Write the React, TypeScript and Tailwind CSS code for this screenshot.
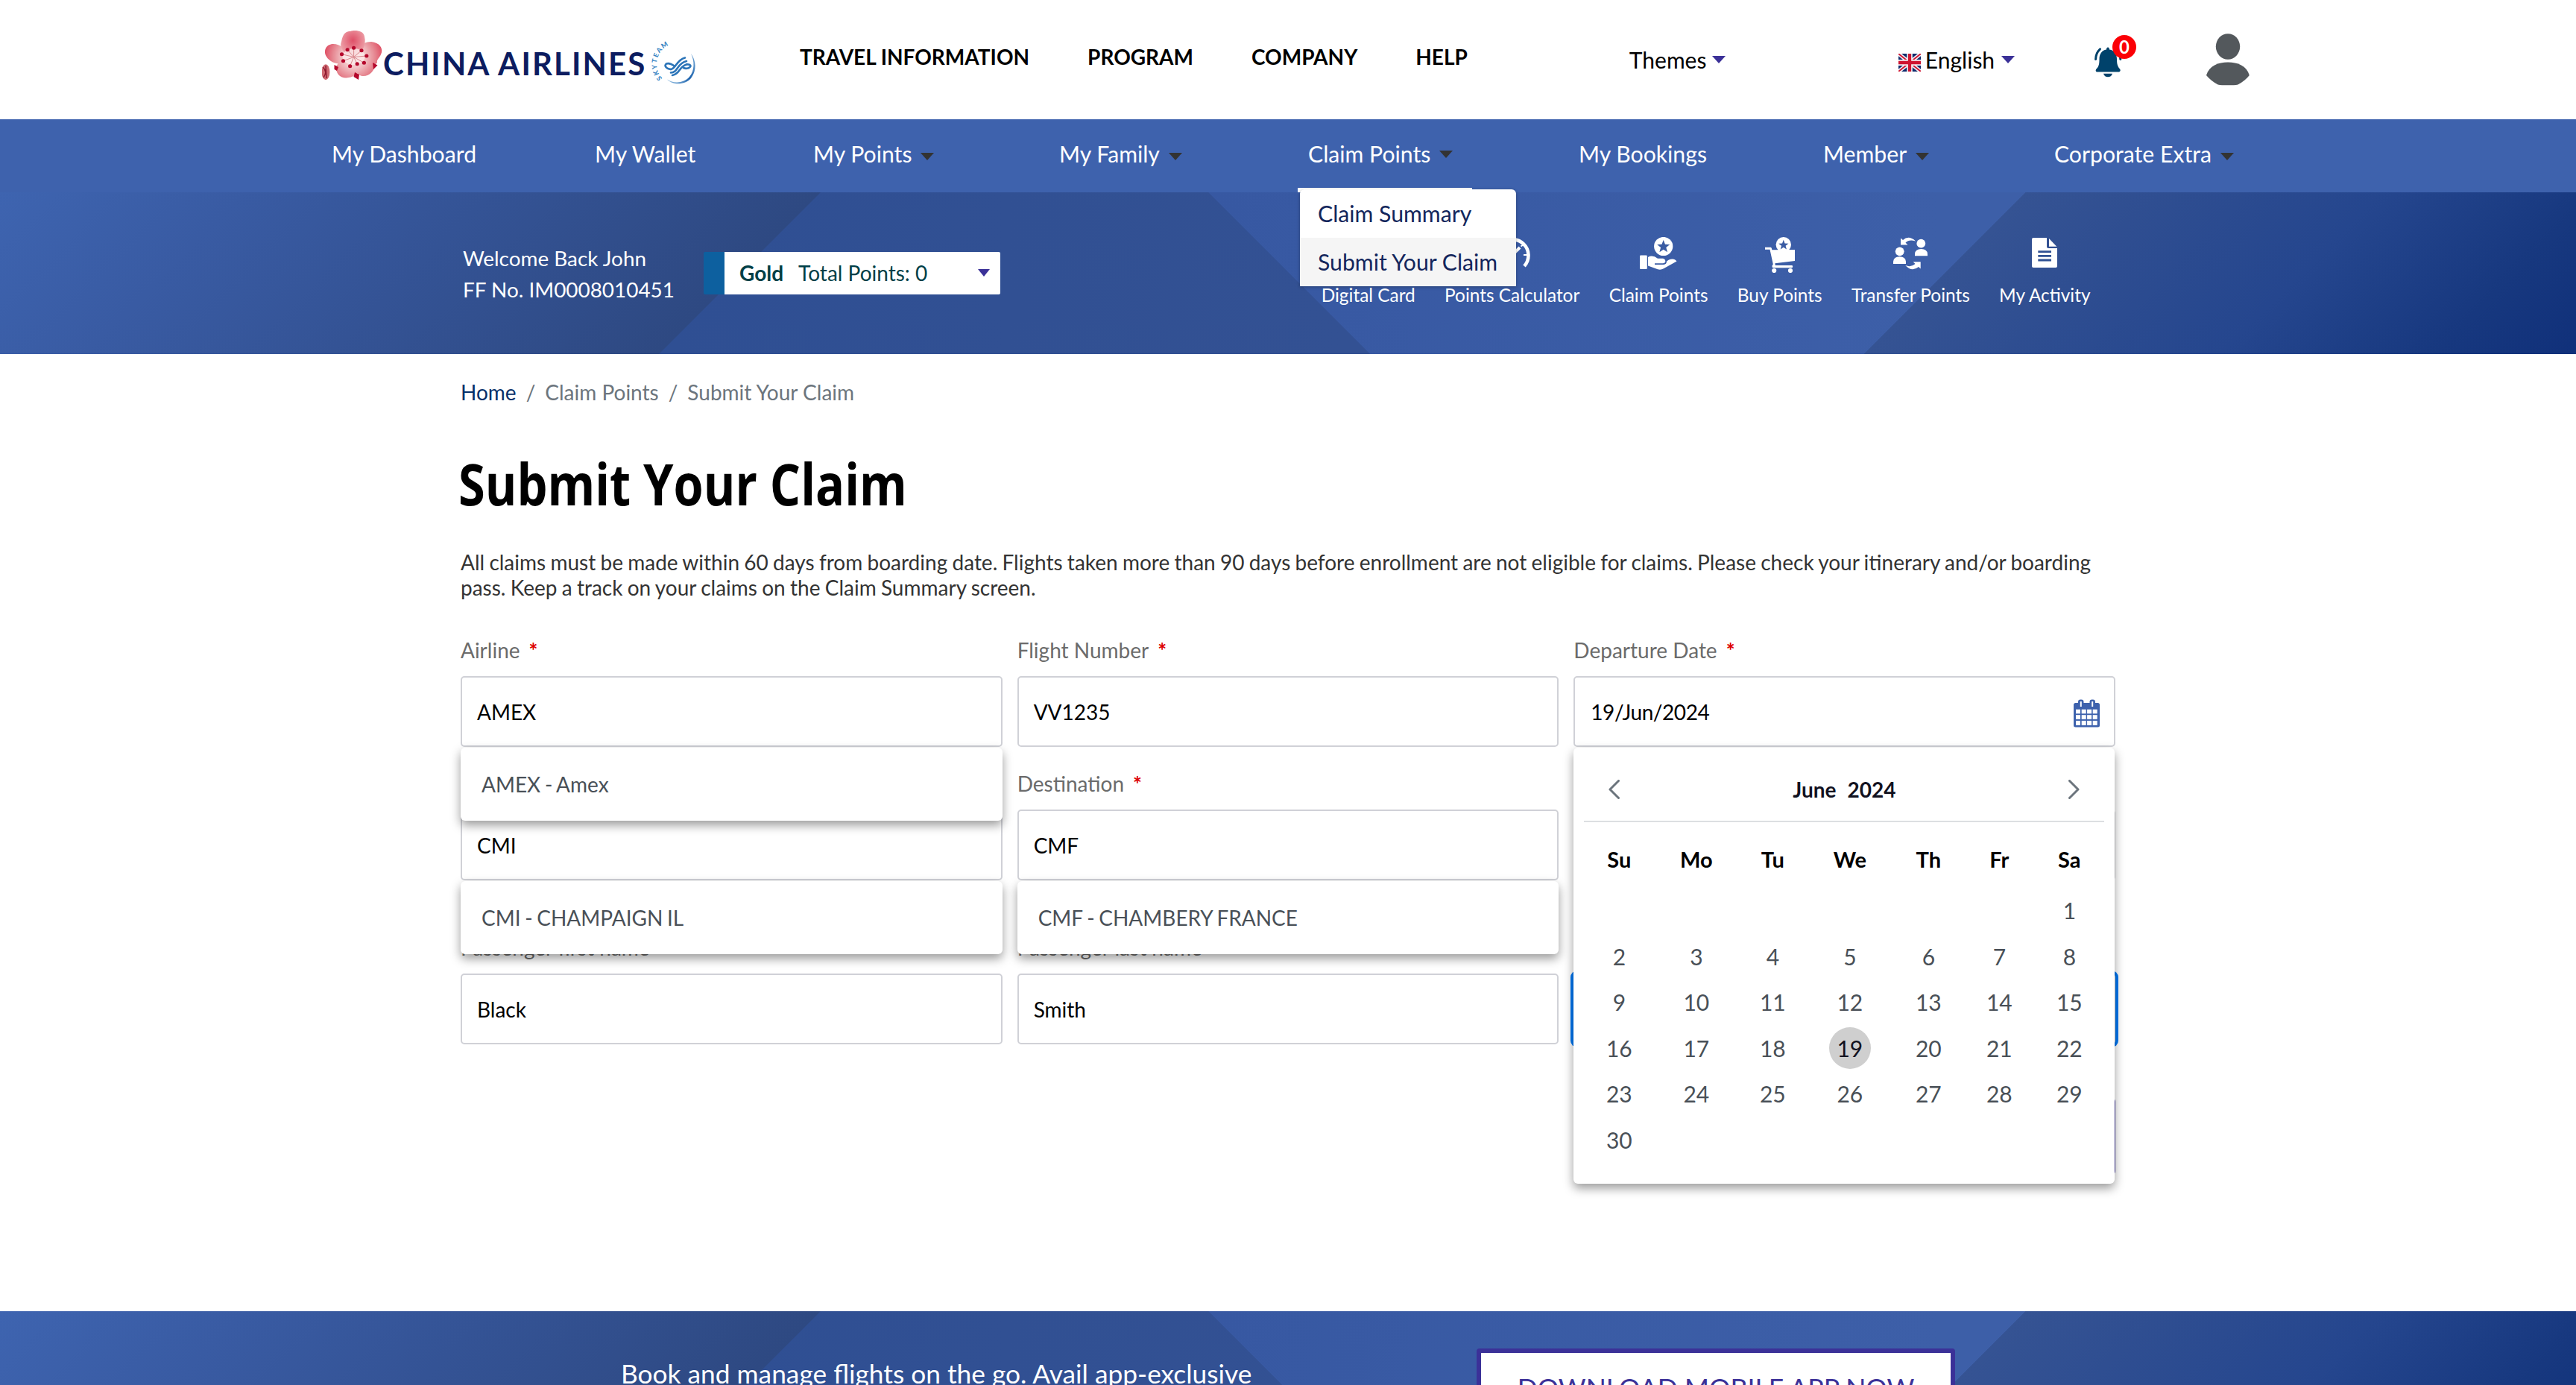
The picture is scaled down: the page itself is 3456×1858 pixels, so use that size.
import type { ReactNode } from "react";

/* ---------- artwork ---------- */

function Flower() {
  const dots = [
    [26.5, 34.7], [34.2, 28.7], [42.6, 26.3], [53, 29.7], [59.8, 37],
    [56.4, 46.3], [47.2, 47.7], [37.6, 50.7], [28.5, 43.7],
  ];
  return (
    <svg width="84" height="72" viewBox="0 0 84 72" className="shrink-0">
      <defs>
        <radialGradient id="petal" gradientUnits="userSpaceOnUse" cx="42.6" cy="38" r="38">
          <stop offset="0" stopColor="#fbeaea" />
          <stop offset="0.4" stopColor="#f2c3c6" />
          <stop offset="0.75" stopColor="#e68791" />
          <stop offset="1" stopColor="#e0566a" />
        </radialGradient>
        <radialGradient id="topPetal" cx="0.5" cy="0.35" r="0.65">
          <stop offset="0" stopColor="#df5068" />
          <stop offset="1" stopColor="#f0b0b4" />
        </radialGradient>
      </defs>
      <ellipse cx="5" cy="58.7" rx="5.4" ry="10.5" fill="#cf6a72" />
      <path d="M1 52 Q8 58 2 66 M5 50 L6 67" stroke="#8f1b30" strokeWidth="1.5" fill="none" />
      <g fill="url(#petal)">
        <path d="M42 42 C30 52 12 48 6 38 C1 30 6 21 15 21 C20 21 24 23 27 25 C34 26 42 32 42 42Z" />
        <path d="M42 42 C42 30 52 18 66 18 C77 19 83 27 79 35 C77 40 73 42 74 46 C70 52 52 54 42 42Z" />
        <path d="M44 36 C36 38 20 44 19 53 C19 62 26 68 36 66 C44 65 48 60 50 54Z" />
        <path d="M40 38 C38 50 46 63 54 64 C63 65 71 57 71 48 C68 38 54 34 40 38Z" />
      </g>
      <path d="M42 40 C33 36 22 27 26 18 C28 6 33 4 38 4 C44 2 56 3 57 11 C60 22 54 34 42 40Z" fill="url(#topPetal)" />
      <ellipse cx="42.6" cy="38" rx="15" ry="11" fill="#fbe9e9" opacity="0.85" />
      <g stroke="#d98a8f" strokeWidth="1">
        {dots.map(([x, y]) => (
          <line key={`${x}l`} x1="42.6" y1="38.5" x2={x} y2={y} />
        ))}
      </g>
      {dots.map(([x, y]) => (
        <ellipse key={x} cx={x} cy={y} rx="2.6" ry="2.5" fill="#b5082c" />
      ))}
      <path d="M44 59 L50 62 L49 69 L42.500 65Z M16.5 49 L22 52 L20 57 L16.5 55Z M68 46 L74.5 49.5 L69 55Z" fill="#b5082c" />
    </svg>
  );
}

function SkyTeam() {
  return (
    <svg width="54" height="54" viewBox="0 0 54 54" className="shrink-0 overflow-visible">
      <defs>
        <path id="skyArc" d="M7.500 45 A23 23 0 0 1 48 7" />
        <linearGradient id="skyRing" x1="0" y1="1" x2="1" y2="0">
          <stop offset="0" stopColor="#9cc6e6" />
          <stop offset="0.5" stopColor="#1c62ad" />
          <stop offset="1" stopColor="#7fb0da" />
        </linearGradient>
      </defs>
      <text className="font-['Lato'] text-[9px] font-black" fill="#3a86c4" letterSpacing="1.6">
        <textPath href="#skyArc">SKYTEAM</textPath>
      </text>
      <path d="M14 46.5 C22 55 38 54 46 45 C54 35 53 21 46 12 C51 22 51 35 44 43 C37 51 24 53 14 46.5Z" fill="url(#skyRing)" />
      <g fill="none" stroke="#2b74b8" strokeWidth="2.6" strokeLinecap="round">
        <path d="M19 33 C25 33 27 20 38 17.5" />
        <path d="M19 37.5 C29 37 27 25 40 22" />
        <path d="M21 41 C32 39 29 30 40 26.5" />
        <path d="M19 33 C12 32 10 28 13 25.5 C17 24 22 27 24 29" />
        <path d="M36 31 C40 33 45 31 45.500 28.500 C45.500 27 43 26 40 26.5" />
      </g>
    </svg>
  );
}

function Flag() {
  return (
    <svg width="30" height="24" viewBox="0 0 60 46" preserveAspectRatio="none" className="shrink-0">
      <rect width="60" height="46" fill="#0f2a6b" />
      <path d="M0 0 L60 46 M60 0 L0 46" stroke="#f3f0f4" strokeWidth="10" />
      <path d="M0 0 L60 46 M60 0 L0 46" stroke="#cf1430" strokeWidth="3.5" />
      <path d="M30 0 V46 M0 23 H60" stroke="#f3f0f4" strokeWidth="15" />
      <path d="M30 0 V46 M0 23 H60" stroke="#cf1430" strokeWidth="8.500" />
    </svg>
  );
}

function Bell() {
  return (
    <svg width="37" height="41" viewBox="0 0 37 41">
      <path d="M18 0.500 C19.500 0.500 20 2 20 3.500 C27 4.500 30 10 30 16 C30 23 31 26 34 29.500 C35.500 31.500 34.500 33.500 32 33.500 H4 C1.500 33.500 1 31.500 2.500 29.500 C6 26 6.500 23 6.500 16 C6.500 10 9.500 4.500 16 3.500 C16 2 16.500 0.500 18 0.500Z" fill="#00426b" />
      <path d="M12 35.800 H24 C23 39 21 40.300 18 40.300 C15 40.300 13 39 12 35.800Z" fill="#00426b" />
      <path d="M7.500 2.800 C3.500 6.500 1.700 11 1.600 16.500 M28.700 2.800 C32.700 6.500 34.700 11 34.800 16.500" stroke="#00426b" strokeWidth="3" strokeLinecap="round" fill="none" />
    </svg>
  );
}

function Avatar() {
  return (
    <svg width="60" height="70" viewBox="0 0 60 70" fill="#53585c">
      <ellipse cx="30" cy="17.500" rx="16.200" ry="17.200" />
      <path d="M1 56 C5 43 17 38.500 30 38.500 C43 38.500 55 43 58.800 56 C55 61 50 65 43.500 68.500 Q41 69.300 38 69.300 H22 Q19 69.300 16.500 68.500 C10 65 5 61 1 56Z" />
    </svg>
  );
}

const STAR = "0,-1 0.25,-0.34 0.95,-0.31 0.4,0.13 0.59,0.81 0,0.42 -0.59,0.81 -0.4,0.13 -0.95,-0.31 -0.25,-0.34";

function CardIcon() {
  return (
    <svg width="48" height="44" viewBox="0 0 48 44" fill="#fff">
      <rect x="2" y="6" width="44" height="32" rx="4" />
    </svg>
  );
}
function GaugeIcon() {
  return (
    <svg width="48" height="44" viewBox="0 0 48 44" fill="none" stroke="#fff">
      <path d="M8 39 A21.500 21.500 0 1 1 40 39" strokeWidth="4.600" />
      <path d="M24 24 L34 14" strokeWidth="4" />
      <path d="M35.500 12.500 L39 10 M39 24 H44 M24 4 V9 M4 24 H9" strokeWidth="2" />
      <circle cx="24" cy="25" r="4" fill="#fff" />
    </svg>
  );
}
function ClaimIcon() {
  return (
    <svg width="50" height="44" viewBox="0 0 50 44" fill="#fff">
      <circle cx="31.700" cy="12.500" r="12.600" />
      <polygon points={STAR} transform="translate(31.7 12.9) scale(9)" fill="#3a5ba3" />
      <rect x="0" y="24.500" width="9.800" height="18.500" rx="1.200" />
      <path d="M11 27 Q17 23.500 24 28.700 H31 Q34.500 29.500 34.300 33 Q33.500 35.300 31 35.300 H20 V37 H32 Q36 36.500 36 32.500 L39 30.500 Q46 27.500 49.500 32.500 L32 42.300 Q28 44.500 24 43.200 L11 38.500Z" />
    </svg>
  );
}
function CartIcon() {
  return (
    <svg width="40" height="48" viewBox="0 0 40 48" fill="#fff">
      <circle cx="24.800" cy="10.200" r="10.200" />
      <polygon points={STAR} transform="translate(24.8 10.8) scale(7)" fill="#3a5ba3" />
      <path d="M0 13.700 H7.500 Q9 13.700 9.300 17.300 L40 17 V32 L13.300 35.200 L13.800 38 H36.500 Q38 39.500 36.500 41.200 H11 Q9 41 9.500 38.500 L10.800 36.500 L6.500 16.700 H0Z" />
      <circle cx="12.200" cy="45" r="3.100" />
      <circle cx="34" cy="45" r="3.100" />
    </svg>
  );
}
function TransferIcon() {
  return (
    <svg width="46" height="45" viewBox="0 0 46 45" fill="#fff">
      <circle cx="8.700" cy="19.300" r="5.900" />
      <path d="M0 36 V33 Q0.500 26.300 8.500 26.300 Q16.500 26.300 17 33 V36Z" />
      <circle cx="37.300" cy="8.700" r="5.900" />
      <path d="M29 25.300 V22.500 Q29.500 16 37.500 16 Q45.500 16 46 22.500 V25.300Z" />
      <path d="M10 1.500 L13 4 Q21 -3 30 5.500 Q21 3 16.500 7.500 L19.500 10.500 H10Z" />
      <path d="M36.700 42.500 L34 40 Q25 47.500 16.300 38 Q24 41 29.500 36 L26.700 33.200 H36.700Z" />
    </svg>
  );
}
function DocIcon() {
  return (
    <svg width="34" height="40" viewBox="0 0 34 40" fill="#fff">
      <path d="M2 0 H20 V12 Q20 14 22 14 H34 V38 Q34 40 32 40 H2 Q0 40 0 38 V2 Q0 0 2 0Z" />
      <path d="M23 1 L33.300 11.700 H23Z" />
      <path d="M8.300 18.600 H26 M8.300 24.300 H26 M8.300 30 H26" stroke="#2f5093" strokeWidth="2.800" />
    </svg>
  );
}

function CalendarIcon() {
  return (
    <svg width="35" height="38" viewBox="0 0 35 38" className="-mr-px mt-[4px]">
      <path d="M2.500 5 H32.500 Q35 5 35 7.500 V35 Q35 37.500 32.500 37.500 H2.500 Q0 37.500 0 35 V7.500 Q0 5 2.500 5Z" fill="#3e62ad" />
      <rect x="6" y="0.500" width="7.500" height="12" rx="3" fill="#3e62ad" />
      <rect x="21.500" y="0.500" width="7.500" height="12" rx="3" fill="#3e62ad" />
      <path d="M9.800 3 V10 M25.200 3 V10" stroke="#fff" strokeWidth="2" />
      <g fill="#fff">
        {[3, 10.700, 18.100, 25.700].map((x) =>
          [13.700, 21.200, 28.900].map((y) => (
            <rect key={`${x}-${y}`} x={x} y={y} width="6" height={y > 28 ? 6 : 5.600} />
          )),
        )}
      </g>
    </svg>
  );
}

function Caret({ className = "" }: { className?: string }) {
  return (
    <svg width="18" height="10" viewBox="0 0 18 10" preserveAspectRatio="none" className={`shrink-0 ${className}`}>
      <path d="M0 0 H18 L9 10Z" fill="currentColor" />
    </svg>
  );
}

/* Diagonal facets behind the member bar and the footer. */
function Facets() {
  return (
    <svg className="absolute inset-0 h-full w-full" viewBox="0 0 3456 217" preserveAspectRatio="xMinYMin slice">
      <defs>
        <linearGradient id="fa" gradientUnits="userSpaceOnUse" x1="0" y1="0" x2="550" y2="550">
          <stop offset="0" stopColor="#3e64b0" />
          <stop offset="0.3" stopColor="#395ba3" />
          <stop offset="0.6" stopColor="#345395" />
          <stop offset="1" stopColor="#2e4982" />
        </linearGradient>
        <linearGradient id="fb" gradientUnits="userSpaceOnUse" x1="900" y1="0" x2="1800" y2="0">
          <stop offset="0" stopColor="#2f4f93" />
          <stop offset="1" stopColor="#335193" />
        </linearGradient>
        <linearGradient id="fc" gradientUnits="userSpaceOnUse" x1="1621" y1="0" x2="2600" y2="0">
          <stop offset="0" stopColor="#3758a2" />
          <stop offset="1" stopColor="#3d5fa8" />
        </linearGradient>
        <linearGradient id="fd" gradientUnits="userSpaceOnUse" x1="2609" y1="109" x2="3087" y2="587">
          <stop offset="0" stopColor="#355393" />
          <stop offset="0.5" stopColor="#25468e" />
          <stop offset="0.8" stopColor="#17387f" />
          <stop offset="1" stopColor="#10307a" />
        </linearGradient>
      </defs>
      <rect width="3456" height="217" fill="url(#fa)" />
      <polygon points="1101,0 1621,0 1838,217 884,217" fill="url(#fb)" />
      <polygon points="1621,0 2718,0 2501,217 1838,217" fill="url(#fc)" />
      <polygon points="2718,0 3456,0 3456,217 2501,217" fill="url(#fd)" />
    </svg>
  );
}

/* ---------- header ---------- */

function TopBar() {
  return (
    <header className="flex h-[160px] items-start pl-[432px] text-black">
      <div className="mt-[38px] flex w-[641px] shrink-0 items-start">
        <Flower />
        <div className="mt-[22px] -ml-[2px] w-[367px] text-[42px] leading-[50px] font-bold tracking-[2.1px] whitespace-nowrap text-[#0c1c60]">
          CHINA AIRLINES
        </div>
        <div className="mt-[22px]">
          <SkyTeam />
        </div>
      </div>
      <nav className="mt-[56px] flex gap-[78px] text-[28px] leading-10 font-bold whitespace-nowrap">
        <a>TRAVEL INFORMATION</a>
        <a>PROGRAM</a>
        <a>COMPANY</a>
        <a>HELP</a>
      </nav>
      <div className="mt-[60px] ml-[217px] flex w-[361px] items-start text-[30px] leading-10">
        Themes
        <Caret className="mt-[15px] ml-[8px] text-[#3b3198]" />
      </div>
      <div className="mt-[60px] flex w-[263px] items-start text-[30px] leading-10">
        <div className="mt-[12px] mr-[6px]">
          <Flag />
        </div>
        English
        <Caret className="mt-[15px] ml-[9px] text-[#3b3198]" />
      </div>
      <div className="relative mt-[63px] w-[149px]">
        <Bell />
        <span className="absolute -top-4 left-[24px] flex size-8 items-center justify-center rounded-full bg-[#fb0006] text-[24px] leading-none font-bold text-white">
          0
        </span>
      </div>
      <div className="mt-[45px]">
        <Avatar />
      </div>
    </header>
  );
}

function MenuItem({ label, width, caret = "", children }: { label: string; width: string; caret?: string; children?: ReactNode }) {
  return (
    <div className={`relative flex shrink-0 items-start ${width}`}>
      {label}
      {caret && <Caret className={`ml-[12px] text-[#333333] ${caret}`} />}
      {children}
    </div>
  );
}

function MainNav() {
  return (
    <nav className="relative z-10 flex h-[98px] bg-[#3e62ad] pt-[26px] pl-[445px] text-[30.2px] leading-10 whitespace-nowrap text-white">
      <MenuItem label="My Dashboard" width="w-[353px]" />
      <MenuItem label="My Wallet" width="w-[293px]" />
      <MenuItem label="My Points" width="w-[330px]" caret="mt-[19px]" />
      <MenuItem label="My Family" width="w-[334px]" caret="mt-[19px]" />
      <MenuItem label="Claim Points" width="w-[363px]" caret="mt-[16px]">
        <div className="absolute top-[66px] -left-[14px] h-[6px] w-[234px] bg-white" />
        <div className="absolute top-[68px] -left-[11px] flex w-[290px] flex-col overflow-hidden rounded-t-[6px] bg-white text-[#13265c] shadow-[0_1px_4px_rgba(0,0,0,0.3)]">
          <a className="flex h-[65px] items-center pb-[2px] pl-6">Claim Summary</a>
          <a className="flex h-[65px] items-center bg-[#f5f5f5] pb-[2px] pl-6">Submit Your Claim</a>
        </div>
      </MenuItem>
      <MenuItem label="My Bookings" width="w-[328px]" />
      <MenuItem label="Member" width="w-[310px]" caret="mt-[19px]" />
      <MenuItem label="Corporate Extra" width="w-[260px]" caret="mt-[19px]" />
    </nav>
  );
}

function QuickLink({ label, pad, icon }: { label: string; pad: string; icon: ReactNode }) {
  return (
    <div className="flex flex-col items-center px-[19.7px]">
      <div className={`h-[64px] ${pad}`}>{icon}</div>
      <span>{label}</span>
    </div>
  );
}

function MemberBar() {
  return (
    <section className="relative h-[217px] overflow-hidden">
      <Facets />
      <div className="relative flex items-start pt-[59px] pl-[621px] whitespace-nowrap text-white">
        <div className="mt-[8px] w-[323px] text-[27.9px] leading-[42px]">
          <p>Welcome Back John</p>
          <p>FF No. IM0008010451</p>
        </div>
        <div className="mt-[21px] flex h-[57px] w-[398px] items-center rounded-[2px] border-l-[28px] border-[#0d609f] bg-white pb-px pl-5 text-[28px] text-[#003f47]">
          <b>Gold</b>
          <span className="ml-[20px]">Total Points: 0</span>
          <Caret className="ml-auto mr-[14px] w-[16px] text-[#3b3198]" />
        </div>
        <div className="ml-[411px] flex text-[24.4px] leading-[30px]">
          <QuickLink label="Digital Card" pad="pt-[1px]" icon={<CardIcon />} />
          <QuickLink label="Points Calculator" pad="pt-[1px]" icon={<GaugeIcon />} />
          <QuickLink label="Claim Points" pad="pt-[1px]" icon={<ClaimIcon />} />
          <QuickLink label="Buy Points" pad="pt-[1px]" icon={<CartIcon />} />
          <QuickLink label="Transfer Points" pad="pt-[1px]" icon={<TransferIcon />} />
          <QuickLink label="My Activity" pad="pt-[2px]" icon={<DocIcon />} />
        </div>
      </div>
    </section>
  );
}

/* ---------- claim form ---------- */

function Suggestion({ text }: { text: string }) {
  return (
    <div className="absolute top-full left-0 z-10 mt-px flex h-[98px] w-full items-center rounded-[6px] bg-white pl-[28px] text-[28px] text-[#495057] shadow-[0_6px_14px_rgba(0,0,0,0.4)] [word-spacing:-1.5px]">
      {text}
    </div>
  );
}

function Field({ label, required = false, value, focused = false, icon, children }: {
  label: string;
  required?: boolean;
  value: string;
  focused?: boolean;
  icon?: ReactNode;
  children?: ReactNode;
}) {
  return (
    <div className="relative h-[150px]">
      <div className="flex h-10 items-center text-[28px] text-[#6b6b6b]">
        {label}
        {required && <span className="ml-[12px] font-bold text-[#dd0000]">*</span>}
      </div>
      <div
        className={`mt-[15px] flex h-[95px] items-center justify-between rounded-[5px] border-2 border-[#d0d1d7] bg-white px-5 text-[28px] text-black ${focused ? "ring-4 ring-[#0078f5]" : ""}`}
      >
        <span className={value.includes("/") ? "ml-px tracking-[-0.45px]" : ""}>{value}</span>
        {icon}
      </div>
      {children}
    </div>
  );
}

function Calendar() {
  const names = ["Su", "Mo", "Tu", "We", "Th", "Fr", "Sa"];
  const blanks = [0, 1, 2, 3, 4, 5];
  const days = Array.from({ length: 30 }, (_, i) => i + 1);
  return (
    <div className="absolute top-full left-0 z-20 mt-px h-[585px] w-[726px] rounded-[6px] bg-white px-[14px] shadow-[0_6px_14px_rgba(0,0,0,0.4)]">
      <div className="flex h-[100px] items-center justify-between border-b-2 border-[#dcdfe2] pt-[14px] pr-[33px] pl-[33px]">
        <svg width="15" height="26" viewBox="0 0 15 26" fill="none" stroke="#6c757d" strokeWidth="3" strokeLinecap="round" strokeLinejoin="round">
          <path d="M13.500 1.500 L2 13 L13.500 24.500" />
        </svg>
        <div className="flex gap-[15px] text-[28px] font-bold text-[#12121f]">
          <span>June</span>
          <span>2024</span>
        </div>
        <svg width="15" height="26" viewBox="0 0 15 26" fill="none" stroke="#6c757d" strokeWidth="3" strokeLinecap="round" strokeLinejoin="round">
          <path d="M1.500 1.500 L13 13 L1.500 24.500" />
        </svg>
      </div>
      <div className="-ml-[2px] grid w-[702px] grid-cols-[98px_109px_96px_111px_100px_90px_98px] text-center text-[30px] text-[#495057]">
        {names.map((n) => (
          <div key={n} className="mt-[17px] mb-[6px] flex h-[65px] items-center justify-center text-[29px] font-bold text-black">
            {n}
          </div>
        ))}
        {blanks.map((b) => (
          <div key={`b${b}`} />
        ))}
        {days.map((d) => (
          <div key={d} className="flex h-[61.5px] items-center justify-center">
            <span className={d === 19 ? "flex size-[56px] items-center justify-center rounded-full bg-[#cfcfcf] text-[#12121f]" : ""}>{d}</span>
          </div>
        ))}
      </div>
    </div>
  );
}

function ClaimForm() {
  return (
    <main className="h-[1284px] w-[2838px] bg-white pt-[31px] pl-[618px]">
      <div className="flex h-10 items-center text-[28px] text-[#6c757d]">
        <span className="text-[#06306a]">Home</span>
        <span className="px-[13px]">/</span>
        <span>Claim Points</span>
        <span className="px-[13px]">/</span>
        <span>Submit Your Claim</span>
      </div>
      <h1 className="mt-[63px] -ml-[3px] h-20 origin-left scale-x-[0.843] font-['Open_Sans'] text-[77px] leading-[80px] font-bold whitespace-nowrap text-black">
        Submit Your Claim
      </h1>
      <p className="mt-[48px] text-[28px] leading-[34px] text-[#333333] [word-spacing:-0.9px]">
        All claims must be made within 60 days from boarding date. Flights taken more than 90 days before enrollment are not eligible for claims. Please check your itinerary and/or boarding
        <br />
        pass. Keep a track on your claims on the Claim Summary screen.
      </p>
      <div className="mt-[47px] grid w-[2220px] grid-cols-3 gap-x-5">
        <Field label="Airline" required value="AMEX">
          <Suggestion text="AMEX - Amex" />
        </Field>
        <Field label="Flight Number" required value="VV1235" />
        <Field label="Departure Date" required value="19/Jun/2024" icon={<CalendarIcon />}>
          <Calendar />
        </Field>
        <div className="mt-[29px]">
          <Field label="" value="CMI">
            <Suggestion text="CMI - CHAMPAIGN IL" />
          </Field>
        </div>
        <div className="mt-[29px]">
          <Field label="Destination" required value="CMF">
            <Suggestion text="CMF - CHAMBERY FRANCE" />
          </Field>
        </div>
        <div className="mt-[29px]">
          <Field label="" value="" />
        </div>
        <div className="mt-[70px]">
          <Field label="Passenger first name" value="Black" />
        </div>
        <div className="mt-[70px]">
          <Field label="Passenger last name" value="Smith" />
        </div>
        <div className="mt-[70px]">
          <Field label="" value="" focused />
        </div>
        <div className="col-start-3 mt-[71px] h-[105px] rounded-[6px] bg-[#3b3198]" />
      </div>
    </main>
  );
}

function Footer() {
  return (
    <footer className="relative h-[99px] overflow-hidden">
      <Facets />
      <div className="relative flex items-start pl-[833px] whitespace-nowrap">
        <p className="mt-[64px] w-[1148px] text-[35.3px] leading-[40px] text-white">
          Book and manage flights on the go. Avail app-exclusive
        </p>
        <div className="mt-[50px] flex h-[104px] w-[642px] items-center justify-center rounded-[4px] border-6 border-[#3b3198] bg-white text-[35.6px] text-[#3b3198]">
          <span className="mt-[2px]">DOWNLOAD MOBILE APP NOW</span>
        </div>
      </div>
    </footer>
  );
}

export default function App() {
  return (
    <div className="h-[1858px] w-[3456px] overflow-hidden bg-white font-['Lato',sans-serif]">
      <TopBar />
      <MainNav />
      <MemberBar />
      <ClaimForm />
      <Footer />
    </div>
  );
}
